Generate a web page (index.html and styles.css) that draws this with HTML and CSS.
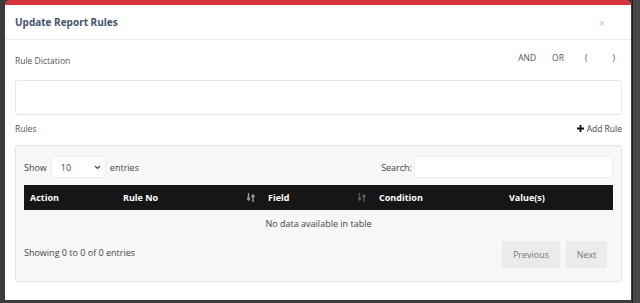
FILE: index.html
```html
<!DOCTYPE html>
<html lang="en">
<head>
    <meta charset="UTF-8">
    <meta name="viewport" content="width=device-width, initial-scale=1.0">
    <title>Update Report Rules</title>
    <link rel="stylesheet" href="styles.css">
</head>
<body>
    <div class="backdrop">
        <div class="modal">
            <div class="modal-header">
                <h4 class="modal-title">Update Report Rules</h4>
                <span class="close">&times;</span>
            </div>

            <div class="modal-body">
                <div class="label-row">
                    <label>Rule Dictation</label>
                    <div class="operators">
                        <a class="op">AND</a>
                        <a class="op">OR</a>
                        <a class="op">(</a>
                        <a class="op">)</a>
                    </div>
                </div>
                <div class="dictation"></div>

                <div class="label-row rules-row">
                    <label>Rules</label>
                    <a class="add-rule">
                        <svg width="7" height="7" viewBox="0 0 7 7"><path d="M2.6 0h1.8v2.6H7v1.8H4.4V7H2.6V4.4H0V2.6h2.6z" fill="#111"/></svg>
                        Add Rule
                    </a>
                </div>

                <div class="panel">
                    <div class="dt-top">
                        <div class="length">
                            Show
                            <span class="select">10
                                <svg width="7" height="5" viewBox="0 0 7 5"><path d="M1 1l2.5 2.5L6 1" fill="none" stroke="#444" stroke-width="1.2"/></svg>
                            </span>
                            entries
                        </div>
                        <div class="search">
                            Search:
                            <span class="search-input"></span>
                        </div>
                    </div>

                    <table class="dt">
                        <thead>
                            <tr>
                                <th class="c-action">Action</th>
                                <th class="c-rule sort">Rule No
                                    <svg class="sort-icon on" width="8" height="9" viewBox="0 0 8 9"><path d="M1.5 0v6.5M0 5l1.5 2L3 5M6 9V2.5M4.5 4L6 2l1.5 2" fill="none" stroke="currentColor" stroke-width="1.4"/></svg>
                                </th>
                                <th class="c-field sort">Field
                                    <svg class="sort-icon" width="8" height="9" viewBox="0 0 8 9"><path d="M1.5 0v6.5M0 5l1.5 2L3 5M6 9V2.5M4.5 4L6 2l1.5 2" fill="none" stroke="currentColor" stroke-width="1.4"/></svg>
                                </th>
                                <th class="c-cond">Condition</th>
                                <th class="c-val">Value(s)</th>
                            </tr>
                        </thead>
                        <tbody>
                            <tr>
                                <td colspan="5" class="empty">No data available in table</td>
                            </tr>
                        </tbody>
                    </table>

                    <div class="dt-bottom">
                        <div class="info">Showing 0 to 0 of 0 entries</div>
                        <div class="paging">
                            <a class="page-btn">Previous</a>
                            <a class="page-btn">Next</a>
                        </div>
                    </div>
                </div>
            </div>
        </div>
        <div class="side"></div>
    </div>
</body>
</html>
```

FILE: styles.css
```css
body {
    margin: 0;
    background-color: #3b3b3b;
    font-family: "Open Sans", Arial, sans-serif;
    overflow: hidden;
}
.backdrop {
    display: flex;
    height: 303px;
}
.modal {
    margin-left: 5px;
    width: 626px;
    height: 295px;
    background: white;
    border-top: 5px solid #d8343b;
    border-radius: 5px 5px 0 0;
    flex-shrink: 0;
}
.side {
    margin-left: 1px;
    width: 8px;
    border-left: 1px solid #1c1c1c;
    background: #474747;
}
.modal-header {
    height: 34px;
    border-bottom: 1px solid #ececec;
    display: flex;
    align-items: center;
    justify-content: space-between;
    padding: 0 26px 0 10px;
}
.modal-title {
    margin: 0;
    font-size: 10px;
    font-weight: 700;
    color: #44546c;
}
.close {
    color: #c4c4c4;
    font-size: 11px;
}
.modal-body {
    padding: 0 9px 0 10px;
}
.label-row {
    display: flex;
    align-items: center;
    justify-content: space-between;
    margin-top: 12px;
    height: 16px;
    font-size: 8.5px;
    color: #555;
}
.operators {
    display: flex;
    margin-top: -6px;
    margin-right: 7px;
}
.op {
    font-size: 8.5px;
    color: #555;
    margin-left: 16px;
}
.op:nth-child(3) { margin-left: 21px; }
.op:nth-child(4) { margin-left: 25px; }
.dictation {
    margin-top: 12px;
    height: 33px;
    border: 1px solid #e6e6e6;
    border-radius: 3px;
}
.rules-row {
    margin-top: 5px;
}
.add-rule {
    display: flex;
    align-items: center;
    gap: 3px;
    color: #444;
}
.panel {
    margin-top: 9px;
    height: 125px;
    background: #f7f7f7;
    border: 1px solid #e4e4e4;
    border-radius: 3px;
    padding: 10px 8px 0 8px;
    font-size: 9px;
    color: #444;
}
.dt-top {
    display: flex;
    justify-content: space-between;
    align-items: center;
    height: 22px;
}
.length, .search {
    display: flex;
    align-items: center;
    gap: 4px;
}
.search { gap: 2px; }
.select {
    width: 40px;
    height: 20px;
    background: white;
    border: 1px solid #efefef;
    border-radius: 2px;
    display: flex;
    align-items: center;
    justify-content: space-between;
    padding: 0 4px 0 9px;
}
.search-input {
    width: 197px;
    height: 20px;
    background: white;
    border: 1px solid #efefef;
    border-radius: 2px;
}
.dt {
    width: 100%;
    margin-top: 7px;
    border-collapse: collapse;
}
.dt th {
    background: #161616;
    color: white;
    font-weight: 700;
    font-size: 9px;
    text-align: left;
    height: 25px;
    padding: 0 6px;
}
.dt th.sort {
    position: relative;
}
.sort-icon {
    position: absolute;
    right: 7px;
    top: 8px;
    color: #5a5a5a;
}
.sort-icon.on { color: #9a9a9a; }
.c-action { width: 81px; }
.c-rule { width: 133px; }
.c-field { width: 99px; }
.c-cond { width: 118px; }
.empty {
    text-align: center;
    height: 26px;
    color: #444;
    padding: 0;
}
.dt-bottom {
    display: flex;
    justify-content: space-between;
    align-items: flex-start;
    margin-top: 5px;
}
.info {
    margin-top: 5px;
}
.paging {
    display: flex;
    gap: 6px;
    margin-right: 6px;
}
.page-btn {
    height: 27px;
    line-height: 27px;
    padding: 0 10px;
    background: #ebebeb;
    border-radius: 3px;
    color: #777;
}
.page-btn:first-child { width: 38px; text-align: center; }
.page-btn:last-child { width: 21px; text-align: center; }
```
